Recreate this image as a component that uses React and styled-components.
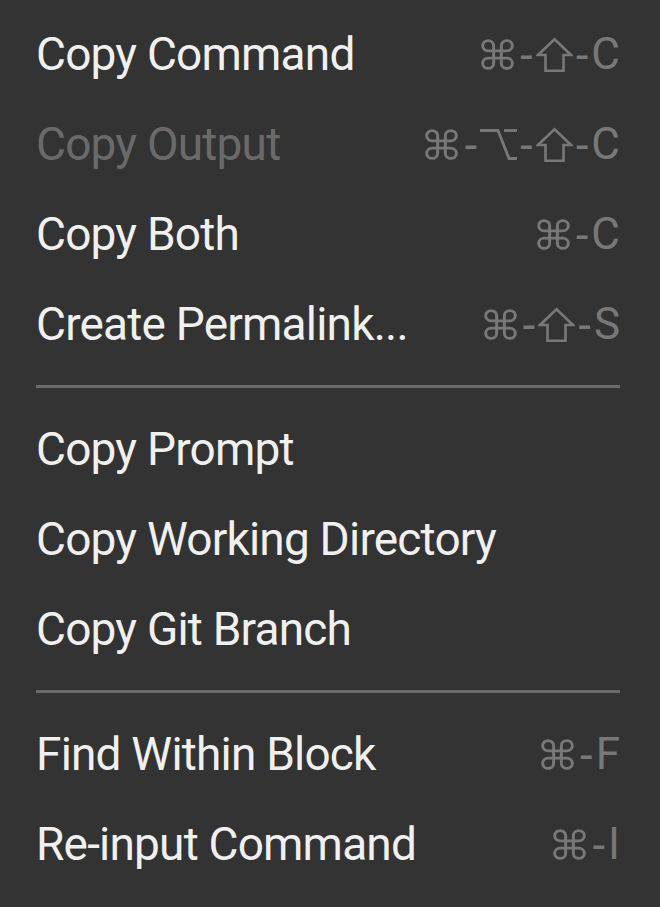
import React from "react";
import styled, { createGlobalStyle } from "styled-components";

const GlobalStyle = createGlobalStyle`
  html, body {
    margin: 0;
    padding: 0;
    background: #333333;
  }
  body {
    font-family: Roboto, "Liberation Sans", sans-serif;
  }
`;

const Menu = styled.ul`
  list-style: none;
  margin: 0;
  padding: 9px 40px 18px 36px;
  width: 660px;
  height: 907px;
  box-sizing: border-box;
  background: #333333;
  display: flex;
  flex-direction: column;
`;

const Item = styled.li`
  height: 90px;
  display: flex;
  align-items: center;
  justify-content: space-between;
  font-size: 46px;
  letter-spacing: -0.8px;
  color: ${(p) => (p.disabled ? "#6a6a6a" : "#f0f0f0")};
`;

const Label = styled.span`
  white-space: nowrap;
`;

const Shortcut = styled.span`
  display: inline-flex;
  align-items: center;
  gap: 2px;
  color: #787878;
  white-space: nowrap;
  font-size: 44px;
  letter-spacing: 0;

  svg {
    display: block;
    flex: none;
  }
`;

const Dash = styled.span`
  font-family: "Liberation Sans", Arial, sans-serif;
  margin-left: ${(p) => p.$after || 0}px;
`;

const Separator = styled.li`
  height: 35px;
  display: flex;
  align-items: center;

  &::after {
    content: "";
    flex: 1;
    height: 3px;
    background: #6b6b6b;
  }
`;

const CmdIcon = () => (
  <svg width="33" height="31" viewBox="0 0 30 30" preserveAspectRatio="none" fill="none" stroke="currentColor" strokeWidth="2.7">
    <path d="M18.5 6.5V23.5A5 5 0 1 0 23.5 18.5H6.5A5 5 0 1 0 11.5 23.5V6.5A5 5 0 1 0 6.5 11.5H23.5A5 5 0 1 0 18.5 6.5" />
  </svg>
);

const OptIcon = () => (
  <svg width="37" height="31" viewBox="0 0 37 31" fill="none" stroke="currentColor" strokeWidth="2.8" strokeLinejoin="miter">
    <path d="M0 1.5H18L29 29.5H37" />
    <path d="M24 1.5H37" />
  </svg>
);

const ShiftIcon = () => (
  <svg width="37" height="35" viewBox="0 0 37 35" fill="none" stroke="currentColor" strokeWidth="2.6" strokeLinejoin="miter">
    <path d="M18.5 2.2L35 18H27.5V33.7H9.5V18H2Z" />
  </svg>
);

const icons = { cmd: CmdIcon, opt: OptIcon, shift: ShiftIcon };

const sections = [
  [
    { label: "Copy Command", keys: ["cmd", "shift", "C"] },
    { label: "Copy Output", keys: ["cmd", "opt", "shift", "C"], disabled: true },
    { label: "Copy Both", keys: ["cmd", "C"] },
    { label: "Create Permalink...", keys: ["cmd", "shift", "S"] },
  ],
  [
    { label: "Copy Prompt" },
    { label: "Copy Working Directory" },
    { label: "Copy Git Branch" },
  ],
  [
    { label: "Find Within Block", keys: ["cmd", "F"] },
    { label: "Re-input Command", keys: ["cmd", "I"] },
  ],
];

const ShortcutText = ({ keys }) => (
  <Shortcut>
    {keys.map((k, i) => {
      const Icon = icons[k];
      return (
        <React.Fragment key={i}>
          {i > 0 && <Dash $after={keys[i - 1] === "cmd" ? 3 : 0}>-</Dash>}
          {Icon ? <Icon /> : <span>{k}</span>}
        </React.Fragment>
      );
    })}
  </Shortcut>
);

export default function App() {
  return (
    <>
      <GlobalStyle />
      <Menu>
        {sections.map((items, s) => (
          <React.Fragment key={s}>
            {s > 0 && <Separator />}
            {items.map((it) => (
              <Item key={it.label} disabled={it.disabled}>
                <Label>{it.label}</Label>
                {it.keys && <ShortcutText keys={it.keys} />}
              </Item>
            ))}
          </React.Fragment>
        ))}
      </Menu>
    </>
  );
}
